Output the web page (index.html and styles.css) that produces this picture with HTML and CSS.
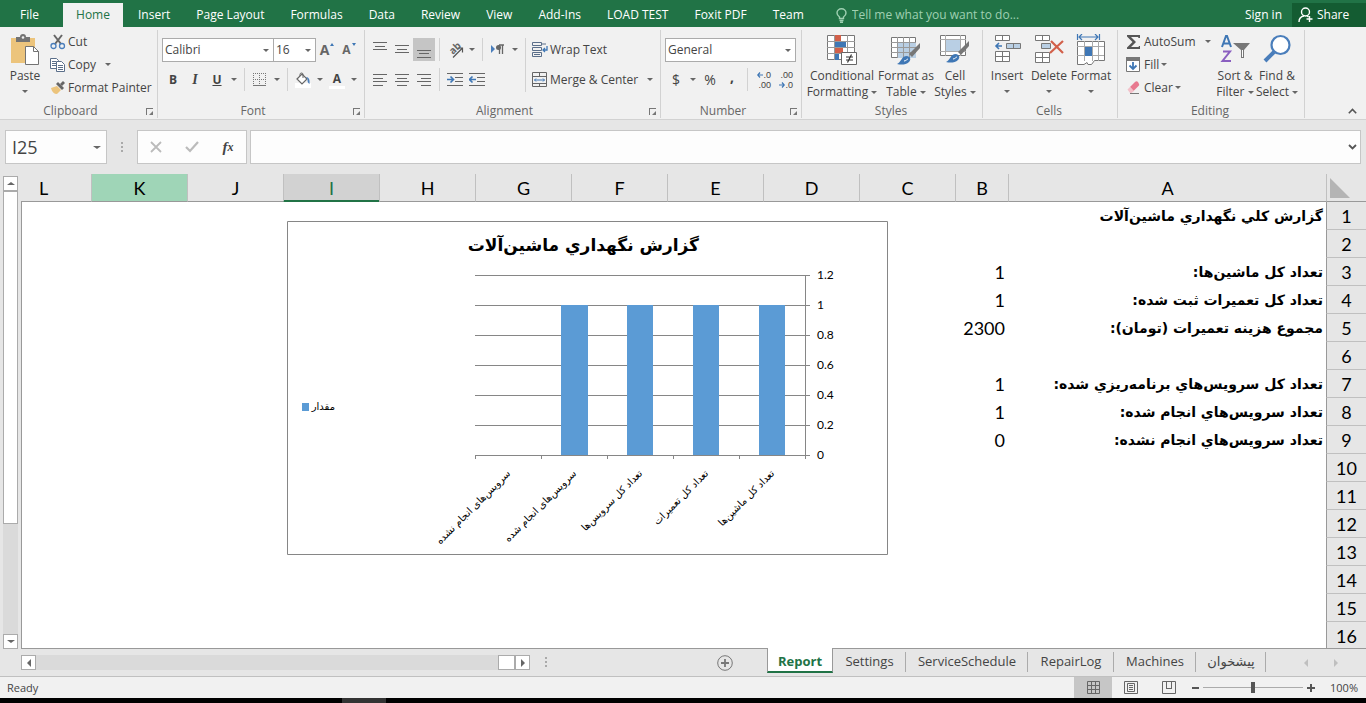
FILE: index.html
```html
<!DOCTYPE html>
<html lang="en">
<head>
<meta charset="utf-8">
<meta name="viewport" content="width=device-width, initial-scale=1">
<title>Report</title>
<link rel="stylesheet" href="styles.css">
</head>
<body>
<div class="app">

  <!-- ribbon tabs -->
  <nav class="tabs">
    <button class="file">File</button>
    <button class="active">Home</button>
    <button>Insert</button>
    <button>Page Layout</button>
    <button>Formulas</button>
    <button>Data</button>
    <button>Review</button>
    <button>View</button>
    <button>Add-Ins</button>
    <button>LOAD TEST</button>
    <button>Foxit PDF</button>
    <button>Team</button>
    <label class="tell" for="tell">
      <svg width="11" height="15" viewBox="0 0 11 15" fill="none" stroke="#9fd0b2" stroke-width="1.4"><path d="M3.5 10.5V9C2 8 1 6.800 1 5a4.500 4.200 0 0 1 9 0c0 1.800-1 3-2.500 4v1.500zM3.500 12.500h4M4 14.200h3"/></svg>
      <input id="tell" type="text" placeholder="Tell me what you want to do...">
    </label>
    <a href="#" class="signin">Sign in</a>
    <button class="share">
      <svg width="16" height="16" viewBox="0 0 16 16" fill="none" stroke="#fff" stroke-width="1.400"><circle cx="7.500" cy="5" r="4"/><path d="M1 15c0-3.500 2-5.500 5-6M9 9l1.500 1M11.500 9v6M8.500 12h6"/></svg>
      Share
    </button>
  </nav>

  <!-- ribbon -->
  <div class="ribbon">
    <section class="group clipboard">
      <div class="body">
        <button class="big paste">
          <svg width="30" height="32" viewBox="0 0 30 32"><path d="M1 4h24v25H1z" fill="#ecc47c"/><path d="M6 3h4a3 3 0 0 1 6 0h4v5H6z" fill="#737373"/><circle cx="13" cy="3.500" r="1.300" fill="#f1f1f1"/><path d="M15.500 12.500h8l5 5v13h-13z" fill="#fff" stroke="#737373"/><path d="M23.500 12.500v5h5" fill="none" stroke="#737373"/></svg>
          <span>Paste</span><i class="arrow"></i>
        </button>
        <div class="stack">
          <button class="small">
            <svg width="16" height="16" viewBox="0 0 16 16" fill="none"><path d="M4 1l7 9M12 1L5 10" stroke="#666" stroke-width="2"/><circle cx="3.500" cy="12" r="2.500" stroke="#4a7ebb" stroke-width="1.300"/><circle cx="12" cy="12" r="2.500" stroke="#4a7ebb" stroke-width="1.300"/></svg>
            Cut
          </button>
          <button class="small">
            <svg width="16" height="16" viewBox="0 0 16 16" fill="#fff" stroke="#5b6f8a"><path d="M.5 1.500h6l2 2v8h-8z"/><path d="M2 4.500h4M2 6.500h4M2 8.500h4"/><path d="M6.500 4.500h5l3 3v7h-8z"/><path d="M8 8.500h5M8 10.500h5M8 12.500h5"/></svg>
            Copy <i class="arrow gap"></i>
          </button>
          <button class="small">
            <svg width="16" height="16" viewBox="0 0 16 16"><path d="M1 8l6-2 4 4-4 4c-3 0-5-2-6-6z" fill="#ecc47c"/><path d="M6 4l2-2 6 6-2 2z" fill="#666"/><path d="M10 4l3-3 2 2-3 3z" fill="#666"/></svg>
            Format Painter
          </button>
        </div>
      </div>
      <footer>Clipboard<i class="launch"></i></footer>
    </section>

    <section class="group font">
      <div class="body rows">
        <div class="row">
          <span class="combo name"><select aria-label="Font"><option>Calibri</option></select></span>
          <span class="combo size"><select aria-label="Font size"><option>16</option></select></span>
          <button class="tool grow">A<i class="up"></i></button>
          <button class="tool grow shrink">A<i class="down"></i></button>
        </div>
        <div class="row">
          <button class="tool"><b>B</b></button>
          <button class="tool ital"><b>I</b></button>
          <button class="tool"><b><u>U</u></b></button>
          <button class="drop" aria-label="Underline style"><i class="arrow"></i></button>
          <i class="sep"></i>
          <button class="tool" aria-label="Borders"><svg width="14" height="14" viewBox="0 0 14 14" fill="none" stroke="#777"><path d="M.5 0v12M6.500 0v12M12.500 0v12M0 .5h13M0 6.500h13" stroke-dasharray="1 1"/><path d="M0 12.500h13"/></svg></button>
          <button class="drop" aria-label="More borders"><i class="arrow"></i></button>
          <i class="sep"></i>
          <button class="tool" aria-label="Fill color"><svg width="16" height="16" viewBox="0 0 16 16"><path d="M0 11h16v5H0z" fill="#fff"/><path d="M2 7l5-5 5 5-5 5z" fill="#fff" stroke="#666" stroke-width="1.200"/><path d="M5 4V2.500a1.500 1.500 0 0 1 3 0V6" fill="none" stroke="#666"/><path d="M11 5c3 0 4 3 3.500 7-2-1-2-3-2-5z" fill="#4a7ebb"/></svg></button>
          <button class="drop" aria-label="More fills"><i class="arrow"></i></button>
          <button class="tool color"><b>A</b></button>
          <button class="drop" aria-label="More colors"><i class="arrow"></i></button>
        </div>
      </div>
      <footer>Font<i class="launch"></i></footer>
    </section>

    <section class="group align">
      <div class="body">
        <div class="rows">
          <div class="row">
            <button class="tool" aria-label="Top align"><svg width="14" height="16" viewBox="0 0 14 16" stroke="#666"><path d="M0 .5h14M2 4.500h10M0 7.500h14"/></svg></button>
            <button class="tool" aria-label="Middle align"><svg width="14" height="16" viewBox="0 0 14 16" stroke="#666"><path d="M0 3.500h14M2 7.500h10M0 10.500h14"/></svg></button>
            <button class="tool on" aria-label="Bottom align"><svg width="14" height="16" viewBox="0 0 14 16" stroke="#666"><path d="M0 8.500h14M2 11.500h10M0 15.500h14"/></svg></button>
            <i class="sep"></i>
            <button class="tool" aria-label="Orientation"><svg class="orient" width="20" height="20" viewBox="0 0 20 20"><text transform="translate(8 15) rotate(-45)">ab</text><path d="M8 17.500L17 8.500M13 8h4.500v4.500" fill="none" stroke="#555" stroke-width="1.200"/></svg></button>
            <button class="drop" aria-label="More orientation"><i class="arrow"></i></button>
            <i class="sep"></i>
            <button class="tool" aria-label="Text direction"><svg width="14" height="12" viewBox="0 0 14 12"><path d="M0 1l4 4-4 4z" fill="#4a7ebb"/><path d="M8 1h5M8.500 1v9M11.500 1v9" stroke="#666" stroke-width="1.300"/><circle cx="7.500" cy="3.500" r="2.500" fill="#666"/></svg></button>
            <button class="drop" aria-label="More direction"><i class="arrow"></i></button>
          </div>
          <div class="row">
            <button class="tool" aria-label="Align left"><svg width="14" height="12" viewBox="0 0 14 12" stroke="#666"><path d="M0 .5h14M0 4.500h10M0 7.500h14M0 11.500h10"/></svg></button>
            <button class="tool" aria-label="Center"><svg width="14" height="12" viewBox="0 0 14 12" stroke="#666"><path d="M0 .5h14M2 4.500h10M0 7.500h14M2 11.500h10"/></svg></button>
            <button class="tool" aria-label="Align right"><svg width="14" height="12" viewBox="0 0 14 12" stroke="#666"><path d="M0 .5h14M4 4.500h10M0 7.500h14M4 11.500h10"/></svg></button>
            <i class="sep"></i>
            <button class="tool" aria-label="Increase indent"><svg width="16" height="13" viewBox="0 0 16 13" fill="none" stroke="#666"><path d="M0 .5h16M8 4.500h8M8 8.500h8M0 12.500h16"/><path d="M0 6.500h6M3.500 3.500l3 3-3 3" stroke="#3f77b5" stroke-width="1.600"/></svg></button>
            <button class="tool" aria-label="Decrease indent"><svg width="16" height="13" viewBox="0 0 16 13" fill="none" stroke="#666"><path d="M0 .5h16M8 4.500h8M8 8.500h8M0 12.500h16"/><path d="M7 6.500H1M3.500 3.500l-3 3 3 3" stroke="#3f77b5" stroke-width="1.600"/></svg></button>
          </div>
        </div>
        <i class="sep tall"></i>
        <div class="rows wraps">
          <button class="small">
            <svg width="16" height="16" viewBox="0 0 16 16" fill="none" stroke="#5b6f8a"><path d="M.5.5h9v3h-9zM9 2h5"/><path d="M.5 5.500h9v3h-9zM.5 10.500h9v4h-9zM2 12.500h6"/><path d="M15 4v4h-4M13 6l-2 2 2 2" stroke="#3f77b5" stroke-width="1.300"/></svg>
            Wrap Text
          </button>
          <button class="small">
            <svg width="16" height="16" viewBox="0 0 16 16" fill="none" stroke="#666"><path d="M.5.500h14v14H.5zM0 4.500h15M0 11.500h15M7.500 0v4M7.500 12v3"/><path d="M2.500 8h10M4 6.500L2.500 8 4 9.500M11 6.500L12.500 8 11 9.500" stroke="#3f77b5"/></svg>
            Merge &amp; Center <i class="arrow gap"></i>
          </button>
        </div>
      </div>
      <footer>Alignment<i class="launch"></i></footer>
    </section>

    <section class="group number">
      <div class="body rows">
        <div class="row">
          <span class="combo format"><select aria-label="Number format"><option>General</option></select></span>
        </div>
        <div class="row">
          <button class="tool sym">$</button>
          <button class="drop" aria-label="More currencies"><i class="arrow"></i></button>
          <button class="tool sym">%</button>
          <button class="tool sym comma">,</button>
          <i class="sep"></i>
          <button class="tool dec" aria-label="Increase decimal"><span><svg width="6" height="6" viewBox="0 0 6 6" fill="none" stroke="#3f77b5" stroke-width="1.200"><path d="M6 3H1M3 .5L.8 3 3 5.500"/></svg>.0</span><span>.00</span></button>
          <button class="tool dec" aria-label="Decrease decimal"><span>.00</span><span><svg width="6" height="6" viewBox="0 0 6 6" fill="none" stroke="#3f77b5" stroke-width="1.200"><path d="M0 3h5M3 .5L5.200 3 3 5.500"/></svg>.0</span></button>
        </div>
      </div>
      <footer>Number<i class="launch"></i></footer>
    </section>

    <section class="group styles">
      <div class="body">
        <button class="big wide">
          <svg width="30" height="32" viewBox="0 0 30 32"><path d="M.5 1.500h27v24H.5z" fill="#fff" stroke="#777"/><path d="M8 1h6v6H8zM8 14h8v5H8z" fill="#d2604a"/><path d="M8 8h11v5H8zM8 20h4v6H8z" fill="#3f77b5"/><path d="M7.500 1v25M20.500 1v25M0 7.500h28M0 13.500h28M0 19.500h28" stroke="#999" fill="none"/><path d="M14.500 18.500h15v12h-15z" fill="#fff" stroke="#666"/><path d="M19 23h7M19 26h7M24.500 20.500l-4 8" stroke="#333" stroke-width="1.200"/></svg>
          <span>Conditional</span><span>Formatting <i class="arrow"></i></span>
        </button>
        <button class="big mid">
          <svg width="30" height="32" viewBox="0 0 30 32"><path d="M.5 3.500h24v20H.5z" fill="#fff" stroke="#777"/><path d="M7 9h18v15H7z" fill="#b9cfe4"/><path d="M6.500 3v21M12.500 3v21M18.500 3v21M0 8.500h25M0 13.500h25M0 18.500h25" stroke="#999"/><path d="M29 9L18 20l3 3 8-9z" fill="#777"/><path d="M6 30c4-1 4-8 10-8 4 1 4 4 2 6-3 3-8 3-12 2z" fill="#3f77b5"/><path d="M13 27c2 0 3-2 4-2" stroke="#fff" fill="none"/></svg>
          <span>Format as</span><span>Table <i class="arrow"></i></span>
        </button>
        <button class="big">
          <svg width="30" height="32" viewBox="0 0 30 32"><path d="M.5 1.500h25v20H.5z" fill="#fff" stroke="#777"/><path d="M5.500 1v21M20.500 1v21M0 5.500h26M0 17.500h26" stroke="#aaa"/><path d="M6 6h14v11H6z" fill="#b9cfe4"/><path d="M29 7L18 18l3 3 8-9z" fill="#777"/><path d="M6 28c4-1 4-8 10-8 4 1 4 4 2 6-3 3-8 3-12 2z" fill="#3f77b5"/><path d="M13 25c2 0 3-2 4-2" stroke="#fff" fill="none"/></svg>
          <span>Cell</span><span>Styles <i class="arrow"></i></span>
        </button>
      </div>
      <footer>Styles</footer>
    </section>

    <section class="group cells">
      <div class="body">
        <button class="big">
          <svg width="28" height="32" viewBox="0 0 28 32" fill="#fff" stroke="#777"><path d="M2.500 1.500h14v5h-14zM9.500 1.500v5M2.500 17.500h14v10h-14zM9.500 17.500v10M2.500 22.500h14"/><path d="M13.500 9.500h14v5h-14zM20.500 9.500v5" fill="#b9cfe4"/><path d="M9 12H3M6 9l-3 3 3 3" fill="none" stroke="#3f77b5" stroke-width="1.600"/></svg>
          <span>Insert</span><i class="arrow"></i>
        </button>
        <button class="big">
          <svg width="30" height="32" viewBox="0 0 30 32" fill="#fff" stroke="#777"><path d="M1.500 1.500h14v5h-14zM8.500 1.500v5M1.500 18.500h14v10h-14zM8.500 18.500v10M1.500 23.500h14"/><path d="M7.500 9.500h9v5h-9z" fill="#b9cfe4"/><path d="M17 7l12 12M29 7L16 19" stroke="#d2604a" stroke-width="2.200"/></svg>
          <span>Delete</span><i class="arrow"></i>
        </button>
        <button class="big">
          <svg width="30" height="32" viewBox="0 0 30 32" fill="none"><path d="M1.500 0v6M23.500 0v6M3 3h19M6 0L3 3l3 3M19 0l3 3-3 3" stroke="#3f77b5" stroke-width="1.200"/><path d="M1.500 7.500h27v19h-10l-3 4H12l-1-2-3 2H1.500z" fill="#fff" stroke="#777"/><path d="M8.500 7v20M16.500 7v20M22.500 7v20M1 12.500h27M1 21.500h27" stroke="#aaa"/><path d="M9 13h7v9H9z" fill="#3f77b5"/></svg>
          <span>Format</span><i class="arrow"></i>
        </button>
      </div>
      <footer>Cells</footer>
    </section>

    <section class="group editing">
      <div class="body">
        <div class="stack">
          <button class="small">
            <svg width="16" height="16" viewBox="0 0 16 16"><path d="M1 1h13v3h-1.500l-.5-1H5l5 5-5 5h7.500l.5-1H14v3H1v-1.500L6.500 8 1 2.500z" fill="#555"/></svg>
            AutoSum <i class="arrow gap"></i>
          </button>
          <button class="small">
            <svg width="16" height="16" viewBox="0 0 16 16"><path d="M.5.500h13v14H.5z" fill="#fff" stroke="#777"/><path d="M0 0h14v4H0z" fill="#777"/><path d="M7 5v7M3.500 8.500L7 12l3.500-3.500" fill="none" stroke="#3f77b5" stroke-width="1.800"/></svg>
            Fill <i class="arrow"></i>
          </button>
          <button class="small">
            <svg width="16" height="16" viewBox="0 0 16 16"><path d="M4 7l5-5c1-1 2-1 3 0l1 2c.5 1 0 1.500-.5 2L7.500 11z" fill="#e8798f"/><path d="M1.500 9.500L4 7l4 4-2.500 2H4z" fill="#f3c0c9"/><path d="M4 13.500h9" stroke="#777"/></svg>
            Clear <i class="arrow"></i>
          </button>
        </div>
        <button class="big">
          <svg width="30" height="32" viewBox="0 0 30 32" fill="none"><path d="M2 13L6 2h1l4 11M3.500 9.500h6" stroke="#3f77b5" stroke-width="2"/><path d="M3 17.500h7L2.500 27H11" stroke="#8a5fc0" stroke-width="2"/><path d="M13 9h17l-6 7v8h-3v-8z" fill="#777"/><path d="M22.500 16v7" stroke="#fff"/></svg>
          <span>Sort &amp;</span><span>Filter <i class="arrow"></i></span>
        </button>
        <button class="big">
          <svg width="30" height="32" viewBox="0 0 30 32" fill="none" stroke="#4a7ebb"><circle cx="18.500" cy="11" r="9" fill="#fff" stroke-width="2.200"/><path d="M12 18L3 27" stroke-width="4"/></svg>
          <span>Find &amp;</span><span>Select <i class="arrow"></i></span>
        </button>
      </div>
      <footer>Editing</footer>
    </section>
    <button class="collapse" aria-label="Collapse ribbon"><svg width="9" height="6" viewBox="0 0 9 6" fill="none" stroke="#555" stroke-width="1.600"><path d="M.8 5.200L4.500 1.500l3.700 3.700"/></svg></button>
  </div>

  <!-- formula bar -->
  <div class="formula">
    <label class="namebox"><input type="text" value="I25" aria-label="Name box"><i class="arrow"></i></label>
    <i class="dots"></i>
    <div class="fx">
      <button aria-label="Cancel"><svg width="12" height="12" viewBox="0 0 12 12" stroke="#bbb" stroke-width="1.800"><path d="M1 1l10 10M11 1L1 11"/></svg></button>
      <button aria-label="Enter"><svg width="14" height="12" viewBox="0 0 14 12" fill="none" stroke="#bbb" stroke-width="2.200"><path d="M1 6l4 4 8-9"/></svg></button>
      <button class="fn">f<sub>x</sub></button>
    </div>
    <label class="entry"><input type="text" aria-label="Formula"><svg width="9" height="6" viewBox="0 0 9 6" fill="none" stroke="#555" stroke-width="1.800"><path d="M1 1l3.500 3.500L8 1"/></svg></label>
  </div>

  <!-- worksheet -->
  <div class="main">
    <div class="vscroll">
      <button aria-label="Scroll up"><i class="up"></i></button>
      <i class="thumb"></i>
      <i class="track"></i>
      <button aria-label="Scroll down"><i class="arrow"></i></button>
    </div>
    <div class="sheet" dir="rtl">
      <table>
        <colgroup><col class="num"><col class="a"><col class="b"><col span="10" class="std"></colgroup>
        <thead>
          <tr><th class="corner"><svg width="20" height="20" viewBox="0 0 20 20"><path d="M0 0v20h20z" fill="#b4b4b4"/></svg></th><th>A</th><th>B</th><th>C</th><th>D</th><th>E</th><th>F</th><th>G</th><th>H</th><th class="current">I</th><th>J</th><th class="hover">K</th><th>L</th></tr>
        </thead>
        <tbody>
          <tr><th>1</th><td>گزارش كلي نگهداري ماشين‌آلات</td><td></td></tr>
          <tr><th>2</th><td></td><td></td></tr>
          <tr><th>3</th><td>تعداد كل ماشين‌ها:</td><td>1</td></tr>
          <tr><th>4</th><td>تعداد كل تعميرات ثبت شده:</td><td>1</td></tr>
          <tr><th>5</th><td>مجموع هزينه تعميرات (تومان):</td><td>2300</td></tr>
          <tr><th>6</th><td></td><td></td></tr>
          <tr><th>7</th><td>تعداد كل سرويس‌هاي برنامه‌ريزي شده:</td><td>1</td></tr>
          <tr><th>8</th><td>تعداد سرويس‌هاي انجام شده:</td><td>1</td></tr>
          <tr><th>9</th><td>تعداد سرويس‌هاي انجام نشده:</td><td>0</td></tr>
          <tr><th>10</th><td></td><td></td></tr>
          <tr><th>11</th><td></td><td></td></tr>
          <tr><th>12</th><td></td><td></td></tr>
          <tr><th>13</th><td></td><td></td></tr>
          <tr><th>14</th><td></td><td></td></tr>
          <tr><th>15</th><td></td><td></td></tr>
          <tr><th>16</th><td></td><td></td></tr>
        </tbody>
      </table>
      <svg class="chart" width="601" height="334" viewBox="0 0 601 334">
        <path class="frame" d="M.5.5h600v333H.5z"/>
        <text class="title" x="412" y="30">گزارش نگهداري ماشين‌آلات</text>
        <path class="grid" d="M188 54.500h335M188 84.500h335M188 114.500h335M188 144.500h335M188 174.500h335M188 204.500h335"/>
        <g class="bars">
          <rect x="274" y="84" width="27" height="150"/>
          <rect x="340" y="84" width="26" height="150"/>
          <rect x="406" y="84" width="26" height="150"/>
          <rect x="472" y="84" width="26" height="150"/>
          <rect x="15" y="182" width="7" height="8"/>
        </g>
        <path class="grid" d="M188 234.500h335M518.500 54v184M188.500 234v4M254.500 234v4M320.500 234v4M386.500 234v4M452.500 234v4"/>
        <g class="values">
          <text x="530" y="58">1.2</text>
          <text x="530" y="88">1</text>
          <text x="530" y="118">0.8</text>
          <text x="530" y="148">0.6</text>
          <text x="530" y="178">0.4</text>
          <text x="530" y="208">0.2</text>
          <text x="530" y="238">0</text>
        </g>
        <g class="names">
          <text transform="translate(488 253) rotate(-45)">تعداد کل ماشین‌ها</text>
          <text transform="translate(422 253) rotate(-45)">تعداد کل تعمیرات</text>
          <text transform="translate(356 253) rotate(-45)">تعداد کل سرویس‌ها</text>
          <text transform="translate(290 253) rotate(-45)">سرویس‌های انجام شده</text>
          <text transform="translate(224 253) rotate(-45)">سرویس‌های انجام نشده</text>
          <text x="48" y="189">مقدار</text>
        </g>
      </svg>
    </div>
  </div>

  <!-- sheet tabs -->
  <div class="sheets">
    <div class="hscroll">
      <button aria-label="Scroll left"><i class="left"></i></button>
      <i class="track"></i>
      <i class="thumb"></i>
      <button aria-label="Scroll right"><i class="right"></i></button>
    </div>
    <i class="dots"></i>
    <button class="add" aria-label="New sheet"><svg width="16" height="16" viewBox="0 0 16 16" fill="none" stroke="#777"><circle cx="8" cy="8" r="7.300"/><path d="M8 4v8M4 8h8" stroke-width="1.800"/></svg></button>
    <button class="tab active">Report</button>
    <button class="tab">Settings</button>
    <button class="tab">ServiceSchedule</button>
    <button class="tab">RepairLog</button>
    <button class="tab">Machines</button>
    <button class="tab">پیشخوان</button>
    <div class="pager"><i class="left"></i><i class="right"></i></div>
  </div>

  <!-- status bar -->
  <div class="status">
    <span class="ready">Ready</span>
    <button class="view on" aria-label="Normal view"><svg width="13" height="13" viewBox="0 0 13 13" fill="none" stroke="#666"><path d="M.5.500h12v12H.5zM4.500 0v13M8.500 0v13M0 4.500h13M0 8.500h13"/></svg></button>
    <button class="view" aria-label="Page layout view"><svg width="14" height="13" viewBox="0 0 14 13" fill="none" stroke="#666"><path d="M.5.500h13v12H.5zM3.500 2.500h7v8h-7zM5 4.500h4M5 6.500h4M5 8.500h4"/></svg></button>
    <button class="view" aria-label="Page break view"><svg width="14" height="13" viewBox="0 0 14 13" fill="none" stroke="#666"><path d="M.5.500h13v12H.5zM4.500 0v7M9.500 0v7M4 7.500h6"/></svg></button>
    <button class="zoombtn" aria-label="Zoom out"><svg width="7" height="8" viewBox="0 0 7 8"><path d="M0 3h7v2H0z" fill="#555"/></svg></button>
    <input type="range" min="0" max="100" value="50" aria-label="Zoom">
    <button class="zoombtn" aria-label="Zoom in"><svg width="8" height="8" viewBox="0 0 8 8"><path d="M0 3h3V0h2v3h3v2H5v3H3V5H0z" fill="#555"/></svg></button>
    <span class="percent">100%</span>
  </div>
  <div class="taskbar"></div>
</div>
</body>
</html>
```
FILE: styles.css
```css
*{
  box-sizing: border-box;
}
body{
  margin: 0;
  font-family: "Open Sans", "DejaVu Sans", sans-serif;
  font-size: 12px;
  line-height: 16px;
  color: #444;
  background: #e6e6e6;
}
button, input, select{
  font: inherit;
  color: inherit;
  border: 0;
  padding: 0;
  margin: 0;
  background: none;
  border-radius: 0;
}
svg{
  display: block;
  flex: none;
}
.app{
  display: flex;
  flex-direction: column;
  height: 100vh;
  overflow: hidden;
}

/* small triangles */
.arrow, .up, .down, .left, .right{
  display: inline-block;
  flex: none;
  border: 3px solid transparent;
}
.arrow, .down{
  border-top-color: #666;
  border-bottom: 0;
}
.up{
  border-bottom-color: #666;
  border-top: 0;
}
.left{
  border-width: 4px;
  border-right-color: #666;
  border-left: 0;
}
.right{
  border-width: 4px;
  border-left-color: #666;
  border-right: 0;
}

/* tabs */
.tabs{
  display: flex;
  flex: none;
  align-items: flex-end;
  height: 27px;
  background: #217346;
  color: #fff;
}
.tabs button{
  height: 24px;
  padding: 0 13px;
  white-space: nowrap;
}
.tabs .file{
  width: 63px;
  padding: 0 0 0 20px;
  text-align: left;
}
.tabs .active{
  width: 60px;
  padding: 0;
  margin-right: 2px;
  background: #f1f1f1;
  color: #217346;
}
.tell{
  display: flex;
  flex: 1;
  align-items: center;
  gap: 5px;
  height: 24px;
  padding-left: 19px;
}
.tell input{
  flex: 1;
  min-width: 0;
}
.tell input::placeholder{
  color: #9fd0b2;
  opacity: 1;
}
.signin{
  line-height: 24px;
  margin-right: 10px;
  color: #fff;
  text-decoration: none;
}
.tabs .share{
  display: flex;
  align-items: center;
  gap: 3px;
  width: 74px;
  padding: 0 0 0 6px;
  background: #145c32;
}

/* ribbon */
.ribbon{
  position: relative;
  display: flex;
  flex: none;
  height: 93px;
  padding: 3px 0 1px;
  background: #f1f1f1;
  border-bottom: 1px solid #d2d2d2;
}
.group{
  display: flex;
  flex-direction: column;
  flex: none;
  border-right: 1px solid #d2d2d2;
}
.group .body{
  display: flex;
  flex: 1;
}
.group footer{
  position: relative;
  height: 16px;
  line-height: 18px;
  text-align: center;
  color: #666;
  padding-right: 16px;
}
.styles footer, .cells footer, .editing footer{
  padding-right: 2px;
}
.launch{
  position: absolute;
  right: 4px;
  top: 6px;
  width: 7px;
  height: 7px;
  border-top: 1px solid #777;
  border-left: 1px solid #777;
}
.launch::after{
  content: "";
  position: absolute;
  right: 0;
  bottom: 0;
  border: 2px solid #777;
  border-top-color: transparent;
  border-left-color: transparent;
}
.clipboard{
  width: 158px;
}
.font{
  width: 207px;
}
.align{
  width: 296px;
}
.number{
  width: 141px;
}
.styles{
  width: 181px;
}
.cells{
  width: 135px;
}
.editing{
  width: 187px;
}
.stack{
  display: flex;
  flex-direction: column;
}
.small{
  display: flex;
  align-items: center;
  gap: 2px;
  height: 23px;
  white-space: nowrap;
}
.small .gap{
  margin-left: 7px;
}
.big{
  display: flex;
  flex-direction: column;
  align-items: center;
  width: 42px;
  padding-top: 4px;
  white-space: nowrap;
}
.big svg{
  margin-bottom: 2px;
}
.big span .arrow{
  vertical-align: middle;
}
.big > .arrow{
  margin-top: 6px;
}
.big.wide{
  width: 72px;
}
.big.mid{
  width: 56px;
}
.paste{
  width: 50px;
}
.styles .body{
  padding-left: 4px;
}
.cells .body{
  padding-left: 3px;
}
.editing .body{
  padding-left: 8px;
}
.editing .stack{
  width: 88px;
}

.rows{
  display: flex;
  flex-direction: column;
  gap: 7px;
  padding-top: 8px;
}
.font .rows, .align .rows{
  padding-left: 4px;
}
.row{
  display: flex;
  align-items: center;
  height: 23px;
}
.combo{
  position: relative;
  height: 24px;
  border: 1px solid #ababab;
  background: #fff;
}
.combo select{
  appearance: none;
  width: 100%;
  height: 22px;
  padding-left: 2px;
}
.combo::after{
  content: "";
  position: absolute;
  right: 4px;
  top: 10px;
  border: 3px solid transparent;
  border-top-color: #666;
  border-bottom: 0;
  pointer-events: none;
}
.combo.name{
  width: 112px;
}
.combo.size{
  width: 42px;
  border-left: 0;
}
.combo.format{
  width: 131px;
}
.tool{
  display: flex;
  align-items: center;
  justify-content: center;
  width: 22px;
  height: 23px;
}
.tool.on{
  background: #c5c5c5;
}
.tool.ital{
  font-family: "Liberation Serif", serif;
  font-size: 14px;
  font-style: italic;
}
.grow{
  gap: 1px;
  font-size: 14px;
  font-weight: bold;
  color: #666;
}
.grow i{
  margin-bottom: 10px;
  border-left-width: 2px;
  border-right-width: 2px;
}
.grow .up{
  border-bottom-color: #3f77b5;
}
.grow .down{
  border-top-color: #3f77b5;
}
.grow.shrink{
  font-size: 12px;
}
.tool.color b{
  width: 16px;
  border-bottom: 3px solid #fff;
  line-height: 15px;
}
.orient{
  overflow: visible;
  font-size: 10px;
  font-weight: bold;
  fill: #666;
}
.drop{
  display: flex;
  align-items: center;
  justify-content: center;
  width: 12px;
  height: 23px;
}
.sep{
  width: 1px;
  height: 23px;
  margin: 0 4px;
  background: #d2d2d2;
}
.sep.tall{
  height: 54px;
  margin: 8px 0 0 4px;
}
.wraps{
  padding-left: 4px;
  margin-left: 2px;
}
.number .rows{
  padding-left: 4px;
}
.sym{
  font-size: 14px;
}
.comma{
  padding-bottom: 6px;
  font-weight: bold;
}
.dec{
  flex-direction: column;
  align-items: flex-end;
  padding-right: 3px;
  font-family: "Liberation Sans", sans-serif;
  font-size: 9px;
  line-height: 10px;
}
.dec span{
  display: flex;
  align-items: center;
}
.collapse{
  margin: auto 9px 4px auto;
}

/* formula bar */
.formula{
  display: flex;
  flex: none;
  align-items: center;
  height: 54px;
  padding: 0 5px;
}
.namebox, .fx, .entry{
  display: flex;
  align-items: center;
  height: 34px;
  background: #fdfdfd;
  border: 1px solid #c6c6c6;
}
.namebox{
  width: 102px;
  padding: 0 5px 0 6px;
}
.namebox input{
  flex: 1;
  min-width: 0;
  font-size: 18px;
}
.namebox .arrow, .vscroll .arrow, .vscroll .up{
  border-left-width: 4px;
  border-right-width: 4px;
}
.dots{
  flex: none;
  width: 2px;
  height: 11px;
  margin: 0 14px;
  background: repeating-linear-gradient(#aaa 0 2px, transparent 2px 4px);
}
.fx{
  justify-content: space-around;
  width: 110px;
}
.fx button{
  width: 36px;
  display: flex;
  justify-content: center;
}
.fx .fn{
  font-family: "Liberation Serif", serif;
  font-size: 15px;
  font-style: italic;
  font-weight: bold;
}
.fn sub{
  font-size: 12px;
}
.entry{
  flex: 1;
  margin-left: 3px;
  padding: 0 3px;
}
.entry input{
  flex: 1;
}

/* worksheet */
.main{
  display: flex;
  flex: 1;
  min-height: 0;
}
.vscroll{
  display: flex;
  flex-direction: column;
  width: 15px;
  margin: 2px 3px 0;
}
.vscroll button, .hscroll button{
  display: flex;
  align-items: center;
  justify-content: center;
  flex: none;
  width: 15px;
  height: 15px;
  background: #fff;
  border: 1px solid #ababab;
}
.vscroll .thumb{
  flex: 332;
  background: #fff;
  border: 1px solid #ababab;
}
.vscroll .track{
  flex: 111;
}
.track{
  background: #dadada;
}
.sheet{
  position: relative;
  flex: 1;
  overflow: hidden;
  border-bottom: 1px solid #999;
  background: linear-gradient(#e6e6e6 28px, #fff 28px);
}
.sheet::before{
  content: "";
  position: absolute;
  left: 0;
  top: 27px;
  bottom: 0;
  border-left: 1px solid #999;
}
table{
  table-layout: fixed;
  border-collapse: separate;
  border-spacing: 0;
  width: 1371px;
  color: #000;
  font-family: Lato, "DejaVu Sans", sans-serif;
  font-size: 18px;
  line-height: 24px;
}
.num{
  width: 40px;
}
.a{
  width: 318px;
}
.b{
  width: 53px;
}
.std{
  width: 96px;
}
th{
  height: 28px;
  padding: 0;
  font-weight: normal;
  background: #e6e6e6;
}
thead th{
  border-left: 1px solid #c0c0c0;
  border-bottom: 1px solid #999;
}
tbody th{
  border-left: 1px solid #999;
  border-bottom: 1px solid #c0c0c0;
}
.corner svg{
  margin: 0 auto 0 3px;
}
th.current{
  background: #d2d2d2;
  color: #217346;
  border-bottom-color: #217346;
  box-shadow: inset 0 -1px #217346;
}
th.hover{
  background: #9fd5b7;
}
td{
  height: 28px;
  padding: 0 3px;
  white-space: nowrap;
  text-align: right;
}
td:nth-child(2){
  font-family: "DejaVu Sans", sans-serif;
  font-size: 14px;
  font-weight: bold;
}
.chart{
  position: absolute;
  right: 478px;
  top: 47px;
}
.frame{
  fill: #fff;
  stroke: #868686;
}
.grid{
  fill: none;
  stroke: #868686;
}
.bars{
  fill: #5b9bd5;
}
.title, .names{
  direction: rtl;
  font-family: "DejaVu Sans", sans-serif;
}
.title{
  font-size: 17px;
  font-weight: bold;
}
.names{
  font-size: 10px;
}
.values{
  direction: ltr;
  font-family: Lato, sans-serif;
  font-size: 12px;
}

/* sheet tabs */
.sheets{
  display: flex;
  flex: none;
  height: 28px;
  border-bottom: 1px solid #c0c0c0;
}
.hscroll{
  display: flex;
  flex: 1;
  height: 15px;
  margin: 6px 0 0 21px;
}
.hscroll .track{
  flex: 1;
}
.hscroll .thumb{
  width: 17px;
  background: #fff;
  border: 1px solid #ababab;
}
.sheets .dots{
  margin: 8px 170px 0 15px;
}
.add{
  width: 16px;
  margin-right: 34px;
}
.tab{
  position: relative;
  width: 122px;
  height: 24px;
  font-size: 13px;
}
.tab::after{
  content: "";
  position: absolute;
  right: 0;
  top: 3px;
  height: 20px;
  border-right: 1px solid #ababab;
}
.tab.active{
  width: 66px;
  height: 25px;
  margin-top: -1px;
  padding-top: 2px;
  background: #fff;
  color: #217346;
  font-weight: bold;
  border: 1px solid #999;
  border-top: 0;
  border-bottom: 2px solid #217346;
}
.tab.active::after{
  display: none;
}
.tab:nth-of-type(3){
  width: 73px;
}
.tab:nth-of-type(5){
  width: 86px;
}
.tab:nth-of-type(6){
  width: 82px;
}
.tab:nth-of-type(7){
  width: 70px;
}
.pager{
  display: flex;
  align-items: center;
  gap: 26px;
  width: 100px;
  padding-left: 38px;
  opacity: .3;
}

/* status bar */
.status{
  display: flex;
  flex: none;
  align-items: center;
  height: 21px;
  background: #f1f1f1;
  font-size: 11px;
}
.ready{
  flex: 1;
  padding-left: 7px;
}
.view{
  display: flex;
  align-items: center;
  justify-content: center;
  width: 38px;
  height: 21px;
}
.view.on{
  background: #c6c6c6;
}
.zoombtn{
  margin: 0 4px;
}
.status input{
  appearance: none;
  width: 100px;
  height: 12px;
  background: linear-gradient(#ababab, #ababab) center / 100% 1px no-repeat;
}
.status input::-webkit-slider-thumb{
  appearance: none;
  width: 4px;
  height: 11px;
  background: #555;
}
.percent{
  width: 36px;
  margin: 0 8px 0 3px;
  text-align: right;
}
.taskbar{
  flex: none;
  height: 5px;
  background: linear-gradient(90deg, #000 342px, #333 342px 386px, #000 386px);
}
```
